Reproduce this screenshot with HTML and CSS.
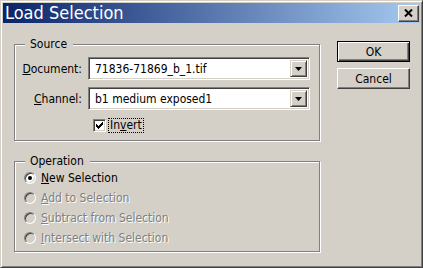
FILE: index.html
```html
<!DOCTYPE html>
<html lang="en">
<head>
<meta charset="UTF-8" />
<title>Load Selection</title>
<link rel="stylesheet" href="styles.css">
</head>
<body>
<div class="window">
  <div class="titlebar">
    <span class="title">Load Selection</span>
    <span class="close">
      <svg width="9" height="8" viewBox="0 0 9 8"><path d="M1 0.5L8 7.5M8 0.5L1 7.5" stroke="#000" stroke-width="2"/></svg>
    </span>
  </div>

  <div class="body">
    <div class="groups">
      <div class="group source">
        <div class="legend">Source</div>
        <div class="row">
          <span class="label"><u>D</u>ocument:</span>
          <div class="combo">
            <span class="value">71836-71869_b_1.tif</span>
            <span class="drop"><svg width="7" height="4" viewBox="0 0 7 4"><path d="M0 0h7l-3.5 4z" fill="#000"/></svg></span>
          </div>
        </div>
        <div class="row second">
          <span class="label"><u>C</u>hannel:</span>
          <div class="combo">
            <span class="value">b1 medium exposed1</span>
            <span class="drop"><svg width="7" height="4" viewBox="0 0 7 4"><path d="M0 0h7l-3.5 4z" fill="#000"/></svg></span>
          </div>
        </div>
        <div class="check-row">
          <span class="check">
            <svg width="9" height="9" viewBox="0 0 9 9" shape-rendering="crispEdges"><path d="M7 1h1v1h-1z M6 2h2v1h-2z M1 3h1v1h-1z M5 3h3v1h-3z M1 4h2v1h-2z M4 4h3v1h-3z M1 5h5v1h-5z M2 6h3v1h-3z M3 7h1v1h-1z" fill="#000"/></svg>
          </span>
          <span class="focus">In<u>v</u>ert</span>
        </div>
      </div>

      <div class="group operation">
        <div class="legend">Operation</div>
        <div class="radio-row"><span class="radio on"></span><span><u>N</u>ew Selection</span></div>
        <div class="radio-row disabled"><span class="radio"></span><span><u>A</u>dd to Selection</span></div>
        <div class="radio-row disabled"><span class="radio"></span><span><u>S</u>ubtract from Selection</span></div>
        <div class="radio-row disabled"><span class="radio"></span><span><u>I</u>ntersect with Selection</span></div>
      </div>
    </div>

    <div class="buttons">
      <div class="btn default">OK</div>
      <div class="btn">Cancel</div>
    </div>
  </div>
</div>
</body>
</html>
```

FILE: styles.css
```css
* {
  box-sizing: border-box;
}
body {
  margin: 0;
  background: #d4d0c8;
  font-family: "DejaVu Sans Condensed", "Liberation Sans", sans-serif;
  font-size: 12px;
  color: #000;
}
.window {
  width: 423px;
  height: 268px;
  padding: 2px;
  border: 1px solid;
  border-color: #d4d0c8 #404040 #404040 #d4d0c8;
  box-shadow: inset 1px 1px #fff, inset -1px -1px #808080;
  background: #d4d0c8;
}
.titlebar {
  height: 20px;
  display: flex;
  align-items: center;
  justify-content: space-between;
  padding-left: 2px;
  background: linear-gradient(to right, #0a246a, #a6caf0);
  color: #fff;
}
.title {
  font-size: 18px;
  line-height: 20px;
}
.close {
  width: 21px;
  height: 17px;
  margin-right: 1px;
  display: flex;
  align-items: center;
  justify-content: center;
  background: #d4d0c8;
  border: 1px solid;
  border-color: #fff #404040 #404040 #fff;
  box-shadow: inset -1px -1px #808080, inset 1px 1px #d4d0c8;
}

/* dialog body */
.body {
  display: flex;
  align-items: flex-start;
}
.groups {
  width: 306px;
  margin: 21px 0 0 11px;
}
.group {
  border: 1px solid #808080;
  box-shadow: inset 1px 1px #fff, 1px 1px #fff;
}
.legend {
  width: fit-content;
  margin: -8px 0 0 10px;
  padding: 0 6px 0 5px;
  line-height: 14px;
  background: #d4d0c8;
}
.source {
  height: 97px;
}
.source .legend {
  margin-bottom: 6px;
}
.operation {
  height: 91px;
  margin-top: 20px;
}
.row {
  display: flex;
  align-items: center;
  height: 23px;
}
.row.second {
  margin-top: 7px;
}
.label {
  width: 67px;
  margin-right: 6px;
  text-align: right;
}
.combo {
  width: 222px;
  height: 23px;
  display: flex;
  align-items: center;
  padding: 2px;
  border: 1px solid;
  border-color: #808080 #fff #fff #808080;
  box-shadow: inset 1px 1px #404040, inset -1px -1px #d4d0c8;
  background: #fff;
}
.value {
  flex: 1;
  padding-left: 4px;
}
.drop {
  width: 17px;
  height: 17px;
  display: flex;
  align-items: center;
  justify-content: center;
  background: #d4d0c8;
  border: 1px solid;
  border-color: #d4d0c8 #404040 #404040 #d4d0c8;
  box-shadow: inset 1px 1px #fff, inset -1px -1px #808080;
}
.check-row {
  display: flex;
  align-items: center;
  margin-top: 8px;
  padding-left: 78px;
}
.check {
  width: 13px;
  height: 13px;
  display: flex;
  border: 1px solid;
  border-color: #808080 #fff #fff #808080;
  box-shadow: inset 1px 1px #404040, inset -1px -1px #d4d0c8;
  background: #fff;
  padding: 1px;
}
.focus {
  margin-left: 2px;
  padding: 0 1px;
  line-height: 13px;
  border: 1px dotted #000;
}

/* radio options */
.radio-row {
  display: flex;
  align-items: center;
  height: 20px;
  padding-left: 9px;
}
.radio {
  width: 12px;
  height: 12px;
  margin-right: 5px;
  display: flex;
  align-items: center;
  justify-content: center;
  border-radius: 50%;
  border: 1px solid;
  border-color: #808080 #fff #fff #808080;
  box-shadow: inset 1px 1px #404040, inset -1px -1px #d4d0c8;
  background: #fff;
}
.radio.on::after {
  content: "";
  width: 4px;
  height: 4px;
  border-radius: 50%;
  background: #000;
}
.disabled {
  color: #808080;
  text-shadow: 1px 1px 0 #fff;
}
.disabled .radio {
  background: #d4d0c8;
}

/* buttons */
.buttons {
  display: flex;
  flex-direction: column;
  gap: 6px;
  margin: 18px 0 0 17px;
}
.btn {
  width: 73px;
  height: 21px;
  display: flex;
  align-items: center;
  justify-content: center;
  border: 1px solid;
  border-color: #fff #404040 #404040 #fff;
  box-shadow: inset -1px -1px #808080, inset 1px 1px #d4d0c8;
}
.btn.default {
  border-color: #000;
  box-shadow: inset 1px 1px #fff, inset -1px -1px #404040, inset -2px -2px #808080;
}
```
